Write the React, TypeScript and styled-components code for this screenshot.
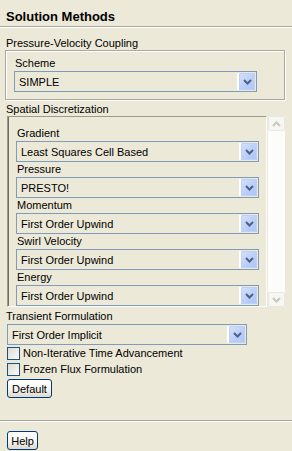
import styled, { createGlobalStyle } from "styled-components";

const GlobalStyle = createGlobalStyle`
  html, body {
    margin: 0;
    padding: 0;
    background: #ece9d8;
  }
  * {
    box-sizing: border-box;
  }
`;

const Page = styled.div`
  width: 292px;
  height: 451px;
  background: #ece9d8;
  font-family: "Liberation Sans", Arial, sans-serif;
  font-size: 11px;
  color: #000;
  display: flex;
  flex-direction: column;
  overflow: hidden;
`;

const Title = styled.div`
  height: 27px;
  padding: 9px 0 0 6px;
  font-size: 13px;
  font-weight: bold;
  border-bottom: 1px solid #aca899;
  box-shadow: 0 1px 0 #fff;
`;

const Body = styled.div`
  flex: 1;
  padding: 0 5px;
  display: flex;
  flex-direction: column;
`;

const SectionLabel = styled.div<{ top?: number }>`
  margin-top: ${p => p.top ?? 0}px;
  padding-left: 1px;
  height: 14px;
  line-height: 14px;
`;

const GroupBox = styled.div`
  width: 280px;
  height: 50px;
  border: 1px solid #aca899;
  box-shadow: inset 1px 1px 0 #fff, 1px 1px 0 #fff;
  padding: 5px 0 0 8px;
`;

const FieldLabel = styled.div`
  height: 15px;
  line-height: 15px;
  padding-left: 1px;
`;

const ScrollRow = styled.div`
  display: flex;
  padding-left: 2px;
  height: 191px;
`;

const SunkenPanel = styled.div`
  width: 260px;
  height: 191px;
  border-top: 1px solid #9d9a8c;
  border-left: 1px solid #9d9a8c;
  border-right: 1px solid #fff;
  border-bottom: 1px solid #fff;
  box-shadow: inset 1px 0 0 #716f64;
  padding: 9px 0 0 8px;
`;

const Scrollbar = styled.div`
  width: 17px;
  height: 191px;
  margin-left: 1px;
  background: #fcfcfa;
  display: flex;
  flex-direction: column;
  justify-content: space-between;
`;

const ScrollButton = styled.div`
  width: 17px;
  height: 15px;
  border: 1px solid #e8e8e2;
  border-radius: 2px;
  background: #f6f6f2;
  display: flex;
  align-items: center;
  justify-content: center;
`;

const Combo = styled.div<{ w: number }>`
  width: ${p => p.w}px;
  height: 21px;
  border: 1px solid #7f9db9;
  background: #ece9d8;
  display: flex;
  align-items: stretch;
`;

const ComboText = styled.div`
  flex: 1;
  padding-left: 3px;
  line-height: 19px;
  border: 1px solid #ece9d8;
`;

const ComboButton = styled.div`
  width: 18px;
  margin: 1px;
  border-left: 2px solid #fff;
  background: linear-gradient(135deg, #d6e2fc 0%, #b8cdf8 60%, #aec6f7 100%);
  display: flex;
  align-items: center;
  justify-content: center;
`;

const ButtonFace = styled.div`
  width: 16px;
  height: 100%;
  border: 1px solid #bed0f8;
  border-radius: 2px;
  display: flex;
  align-items: center;
  justify-content: center;
`;

const ComboWrap = styled.div`
  padding-left: 2px;
  margin-top: 1px;
`;

const CheckList = styled.div`
  margin-top: 0;
`;

const CheckRow = styled.label`
  display: flex;
  align-items: center;
  height: 16px;
  line-height: 16px;
  gap: 3px;
  padding-left: 2px;
`;

const CheckBox = styled.span`
  flex: none;
  width: 13px;
  height: 13px;
  border: 1px solid #1c5180;
  background: linear-gradient(135deg, #dcdcd7 0%, #f4f4f0 80%, #fff 100%);
`;

const ButtonRow = styled.div`
  margin-top: 2px;
  padding-left: 2px;
  height: 19px;
`;

const XPButton = styled.button<{ w: number }>`
  display: block;
  width: ${p => p.w}px;
  height: 19px;
  padding: 0;
  font-family: inherit;
  font-size: 11px;
  color: #000;
  border: 1px solid #003c74;
  border-radius: 3px;
  background: linear-gradient(180deg, #fff 0%, #f4f3ee 60%, #dcd8cc 100%);
`;

const Footer = styled.div`
  height: 31px;
  border-top: 1px solid #aca899;
  box-shadow: inset 0 1px 0 #fff;
  padding: 10px 0 0 7px;
`;

function Chevron({ color = "#4d6185", up = false }: { color?: string; up?: boolean }) {
  return (
    <svg width="9" height="6" viewBox="0 0 9 6">
      <polyline
        points={up ? "1,5 4.5,1.5 8,5" : "1,1 4.5,4.5 8,1"}
        fill="none"
        stroke={color}
        strokeWidth="2"
      />
    </svg>
  );
}

function Select({ value, width }: { value: string; width: number }) {
  return (
    <Combo w={width}>
      <ComboText>{value}</ComboText>
      <ComboButton>
        <ButtonFace>
          <Chevron />
        </ButtonFace>
      </ComboButton>
    </Combo>
  );
}

const spatial = [
  { label: "Gradient", value: "Least Squares Cell Based" },
  { label: "Pressure", value: "PRESTO!" },
  { label: "Momentum", value: "First Order Upwind" },
  { label: "Swirl Velocity", value: "First Order Upwind" },
  { label: "Energy", value: "First Order Upwind" },
];

export default function App() {
  return (
    <Page>
      <GlobalStyle />
      <Title>Solution Methods</Title>
      <Body>
        <SectionLabel top={9}>Pressure-Velocity Coupling</SectionLabel>
        <GroupBox>
          <FieldLabel>Scheme</FieldLabel>
          <Select value="SIMPLE" width={243} />
        </GroupBox>
        <SectionLabel top={2}>Spatial Discretization</SectionLabel>
        <ScrollRow>
          <SunkenPanel>
            {spatial.map(f => (
              <div key={f.label}>
                <FieldLabel>{f.label}</FieldLabel>
                <Select value={f.value} width={243} />
              </div>
            ))}
          </SunkenPanel>
          <Scrollbar>
            <ScrollButton>
              <Chevron color="#c9c9c0" up />
            </ScrollButton>
            <ScrollButton>
              <Chevron color="#c9c9c0" />
            </ScrollButton>
          </Scrollbar>
        </ScrollRow>
        <SectionLabel top={2}>Transient Formulation</SectionLabel>
        <ComboWrap>
          <Select value="First Order Implicit" width={240} />
        </ComboWrap>
        <CheckList>
          <CheckRow>
            <CheckBox />
            Non-Iterative Time Advancement
          </CheckRow>
          <CheckRow>
            <CheckBox />
            Frozen Flux Formulation
          </CheckRow>
        </CheckList>
        <ButtonRow>
          <XPButton w={45}>Default</XPButton>
        </ButtonRow>
      </Body>
      <Footer>
        <XPButton w={31}>Help</XPButton>
      </Footer>
    </Page>
  );
}
